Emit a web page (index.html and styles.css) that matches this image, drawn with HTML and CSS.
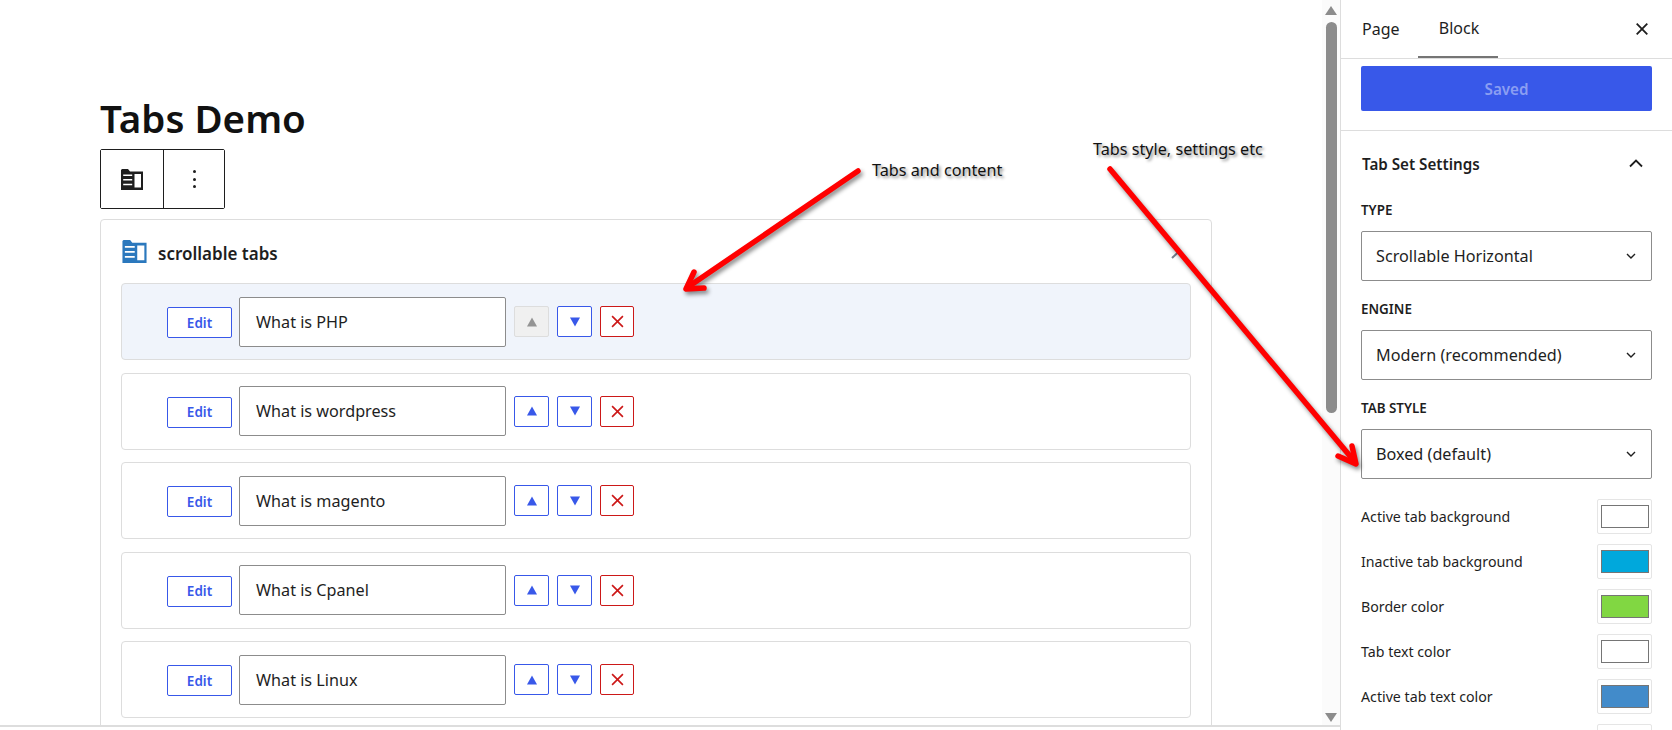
FILE: index.html
```html
<!DOCTYPE html>
<html lang="en">
<head>
    <meta charset="UTF-8">
    <title>Tabs Demo</title>
    <link rel="stylesheet" href="styles.css">
</head>
<body>
    <svg width="0" height="0" class="defs">
        <symbol id="tabs-icon" viewBox="0 0 22 21">
            <path fill-rule="evenodd" d="M1 0h6l2 2.500h13V21H0V1zM13.500 5v13.500H20V5zM2.200 5.500V7h9V5.500zM2.200 10v1.600h9V10zM2.200 14.700v1.600h9v-1.600z"/>
        </symbol>
        <symbol id="up" viewBox="0 0 12 12"><path d="M6 1.500 11 10.500H1z"/></symbol>
        <symbol id="down" viewBox="0 0 12 12"><path d="M1 1.500H11L6 10.500z"/></symbol>
        <symbol id="cross" viewBox="0 0 12 12"><path d="M1 1 11 11M11 1 1 11" fill="none" stroke="currentColor" stroke-width="1.500"/></symbol>
        <symbol id="chev" viewBox="0 0 10 6"><path d="M1 1 5 5 9 1" fill="none" stroke="currentColor" stroke-width="1.400"/></symbol>
    </svg>

    <div class="app">
        <div class="canvas">
            <div class="canvas__main">
                <h1 class="title">Tabs Demo</h1>
                <div class="toolbar">
                    <button class="toolbar__btn toolbar__btn--first"><svg class="toolbar__icon"><use href="#tabs-icon"/></svg></button>
                    <button class="toolbar__btn"><span class="dots"><i></i><i></i><i></i></span></button>
                </div>
                <div class="block">
                    <div class="block__head">
                        <svg class="block__icon"><use href="#tabs-icon"/></svg>
                        <span class="block__name">scrollable tabs</span>
                        <svg class="block__chev" viewBox="0 0 18 10"><path d="M1 9 9 1.500" fill="none" stroke="currentColor" stroke-width="2"/></svg>
                    </div>
                    <div class="row row--active">
                        <button class="edit">Edit</button>
                        <div class="field">What is PHP</div>
                        <button class="sq sq--off"><svg><use href="#up"/></svg></button>
                        <button class="sq"><svg><use href="#down"/></svg></button>
                        <button class="sq sq--del"><svg><use href="#cross"/></svg></button>
                    </div>
                    <div class="row">
                        <button class="edit">Edit</button>
                        <div class="field">What is wordpress</div>
                        <button class="sq"><svg><use href="#up"/></svg></button>
                        <button class="sq"><svg><use href="#down"/></svg></button>
                        <button class="sq sq--del"><svg><use href="#cross"/></svg></button>
                    </div>
                    <div class="row">
                        <button class="edit">Edit</button>
                        <div class="field">What is magento</div>
                        <button class="sq"><svg><use href="#up"/></svg></button>
                        <button class="sq"><svg><use href="#down"/></svg></button>
                        <button class="sq sq--del"><svg><use href="#cross"/></svg></button>
                    </div>
                    <div class="row">
                        <button class="edit">Edit</button>
                        <div class="field">What is Cpanel</div>
                        <button class="sq"><svg><use href="#up"/></svg></button>
                        <button class="sq"><svg><use href="#down"/></svg></button>
                        <button class="sq sq--del"><svg><use href="#cross"/></svg></button>
                    </div>
                    <div class="row">
                        <button class="edit">Edit</button>
                        <div class="field">What is Linux</div>
                        <button class="sq"><svg><use href="#up"/></svg></button>
                        <button class="sq"><svg><use href="#down"/></svg></button>
                        <button class="sq sq--del"><svg><use href="#cross"/></svg></button>
                    </div>
                </div>
            </div>
            <div class="scrollbar">
                <span class="scrollbar__up"></span>
                <span class="scrollbar__thumb"></span>
                <span class="scrollbar__down"></span>
            </div>
        </div>

        <aside class="side">
            <div class="tabs">
                <span class="tabs__item">Page</span>
                <span class="tabs__item tabs__item--on">Block</span>
                <svg class="tabs__close" viewBox="0 0 12 12"><path d="M.7.7 11.300 11.300M11.300.7.7 11.300" fill="none" stroke="currentColor" stroke-width="1.800"/></svg>
            </div>
            <div class="save"><button class="save__btn">Saved</button></div>
            <div class="panel">
                <div class="panel__head">
                    <span>Tab Set Settings</span>
                    <svg class="panel__chev" viewBox="0 0 14 9"><path d="M1 7.500 7 1.500 13 7.500" fill="none" stroke="currentColor" stroke-width="1.800"/></svg>
                </div>
                <div class="opt">
                    <div class="opt__label">TYPE</div>
                    <div class="select">Scrollable Horizontal<svg class="select__chev"><use href="#chev"/></svg></div>
                </div>
                <div class="opt">
                    <div class="opt__label">ENGINE</div>
                    <div class="select">Modern (recommended)<svg class="select__chev"><use href="#chev"/></svg></div>
                </div>
                <div class="opt">
                    <div class="opt__label">TAB STYLE</div>
                    <div class="select">Boxed (default)<svg class="select__chev"><use href="#chev"/></svg></div>
                </div>
                <div class="colors">
                    <div class="color"><span>Active tab background</span><span class="swatch"><i class="swatch__c swatch__c--white"></i></span></div>
                    <div class="color"><span>Inactive tab background</span><span class="swatch"><i class="swatch__c swatch__c--cyan"></i></span></div>
                    <div class="color"><span>Border color</span><span class="swatch"><i class="swatch__c swatch__c--green"></i></span></div>
                    <div class="color"><span>Tab text color</span><span class="swatch"><i class="swatch__c swatch__c--white"></i></span></div>
                    <div class="color"><span>Active tab text color</span><span class="swatch"><i class="swatch__c swatch__c--blue"></i></span></div>
                    <div class="color"><span></span><span class="swatch"><i class="swatch__c swatch__c--white"></i></span></div>
                </div>
            </div>
        </aside>
    </div>

    <!-- annotations drawn over the screenshot -->
    <span class="note note--one">Tabs and content</span>
    <span class="note note--two">Tabs style, settings etc</span>
    <svg class="arrows" viewBox="0 0 1672 730">
        <g fill="none" stroke="#f00" stroke-width="5.500" stroke-linecap="round" stroke-linejoin="round">
            <path d="M858 171 688 287"/>
            <path d="M694 272 686 289 704 288"/>
            <path d="M1110 169 1355 462"/>
            <path d="M1338 456 1356 464 1352 446"/>
        </g>
    </svg>
</body>
</html>
```

FILE: styles.css
```css
:root {
    --blue: #3858e9;
    --line: #ddd;
    --ink: #1e1e1e;
}

html,
body {
    height: 100%;
}

body {
    margin: 0;
    overflow: hidden;
    background: #fff;
    color: var(--ink);
    font-family: "Noto Sans", sans-serif;
    font-size: 14px;
}

button {
    font-family: inherit;
    padding: 0;
    background: #fff;
}

.defs {
    position: absolute;
}

.app {
    display: flex;
    height: 100%;
}

/* canvas */
.canvas {
    display: flex;
    flex: 1;
    min-width: 0;
    height: 725px;
    overflow: hidden;
    border-bottom: 2px solid var(--line);
}

.canvas__main {
    flex: 1;
    min-width: 0;
    padding: 93px 0 0 100px;
    overflow: hidden;
}

.title {
    margin: 0 0 5px;
    font-size: 38.500px;
    line-height: 51px;
    font-weight: 600;
    color: #111;
}

.toolbar {
    display: flex;
    width: 123px;
    height: 58px;
    border: 1px solid var(--ink);
    border-radius: 2px;
}

.toolbar__btn {
    flex: 1;
    display: flex;
    align-items: center;
    justify-content: center;
    border: 0;
}

.toolbar__btn--first {
    flex: 0 0 63px;
    border-right: 1px solid var(--ink);
}

.toolbar__icon {
    width: 22px;
    height: 21px;
    fill: #1e1e1e;
}

.dots {
    display: flex;
    flex-direction: column;
    gap: 4.500px;
}

.dots i {
    width: 3px;
    height: 3px;
    border-radius: 50%;
    background: var(--ink);
}

.block {
    width: 1070px;
    margin-top: 10px;
    padding: 0 20px 20px;
    border: 1px solid var(--line);
    border-radius: 4px;
}

.block__head {
    display: flex;
    align-items: center;
    gap: 11px;
    box-sizing: border-box;
    height: 63px;
    padding: 4px 0 0 1px;
    color: var(--ink);
}

.block__icon {
    width: 25px;
    height: 23px;
    margin-top: -4px;
    fill: #2b78bd;
}

.block__name {
    flex: 1;
    font-size: 17px;
    font-weight: 600;
}

.block__chev {
    width: 18px;
    height: 10px;
    margin-right: 2px;
    color: #757f8c;
}

.row {
    display: flex;
    align-items: center;
    gap: 8px;
    height: 75px;
    margin-bottom: 12.500px;
    padding-left: 45px;
    border: 1px solid var(--line);
    border-radius: 4px;
}

.row--active {
    background: #f0f4fb;
}

.edit {
    width: 65px;
    height: 31px;
    margin-top: 2px;
    margin-right: -1px;
    border: 1px solid var(--blue);
    border-radius: 2px;
    color: var(--blue);
    font-size: 13.500px;
    font-weight: 600;
}

.field {
    box-sizing: border-box;
    width: 267px;
    height: 50px;
    padding-left: 16px;
    border: 1px solid #8c8c8c;
    border-radius: 2px;
    background: #fff;
    font-size: 16.200px;
    line-height: 48px;
}

.sq {
    display: flex;
    align-items: center;
    justify-content: center;
    width: 35px;
    height: 31px;
    border: 1px solid var(--blue);
    border-radius: 2px;
    color: var(--blue);
}

.sq svg {
    width: 12px;
    height: 12px;
    fill: currentColor;
}

.sq--off {
    border-color: #ddd;
    background: #f0f0f0;
    color: #949494;
}

.sq--del {
    width: 34px;
    border-color: #cc1818;
    color: #cc1818;
}

.sq--del svg {
    width: 13px;
    height: 13px;
}

/* fake browser scrollbar */
.scrollbar {
    flex: 0 0 18px;
    display: flex;
    flex-direction: column;
    align-items: center;
    background: #fbfbfb;
}

.scrollbar__up {
    width: 0;
    margin: 6px 0 7px;
    border: 6px solid transparent;
    border-top: 0;
    border-bottom: 9px solid #8c8c8c;
}

.scrollbar__thumb {
    width: 11px;
    height: 391px;
    border-radius: 6px;
    background: #8c8c8c;
}

.scrollbar__down {
    width: 0;
    margin-top: auto;
    margin-bottom: 3px;
    border: 6px solid transparent;
    border-bottom: 0;
    border-top: 9px solid #8c8c8c;
}

/* sidebar */
.side {
    flex: 0 0 331px;
    height: 100%;
    overflow: hidden;
    border-left: 1px solid var(--line);
}

.tabs {
    display: flex;
    align-items: center;
    height: 58px;
    border-bottom: 1px solid var(--line);
}

.tabs__item {
    display: flex;
    align-items: center;
    box-sizing: border-box;
    width: 77px;
    height: 100%;
    padding-left: 21px;
    font-size: 16px;
}

.tabs__item--on {
    justify-content: center;
    width: 80px;
    padding-left: 2px;
    border-bottom: 2px solid #757575;
}

.tabs__close {
    width: 12px;
    height: 12px;
    margin-left: auto;
    margin-right: 24px;
}

.save {
    padding: 7px 20px 19px;
    border-bottom: 1px solid var(--line);
}

.save__btn {
    display: block;
    width: 100%;
    height: 45px;
    border: 0;
    border-radius: 2px;
    background: var(--blue);
    color: #8b9ef2;
    font-size: 15.200px;
    font-weight: 600;
}

.panel {
    padding: 0 20px;
}

.panel__head {
    display: flex;
    align-items: center;
    justify-content: space-between;
    height: 65px;
    margin-bottom: 4px;
    padding-left: 1px;
    font-size: 15.200px;
    font-weight: 600;
}

.panel__chev {
    width: 14px;
    height: 9px;
    margin-right: 9px;
}

.opt {
    margin-bottom: 18px;
}

.opt__label {
    height: 31px;
    font-size: 13.400px;
    font-weight: 600;
    line-height: 21px;
}

.select {
    box-sizing: border-box;
    display: flex;
    align-items: center;
    justify-content: space-between;
    height: 50px;
    padding: 0 15px 0 14px;
    border: 1px solid #8c8c8c;
    border-radius: 2px;
    font-size: 16.200px;
}

.select__chev {
    width: 10px;
    height: 6px;
}

.colors {
    display: flex;
    flex-direction: column;
    gap: 10px;
    margin-top: 20px;
}

.color {
    display: flex;
    align-items: center;
    justify-content: space-between;
    height: 35px;
    font-size: 14.200px;
}

.swatch {
    box-sizing: border-box;
    display: flex;
    align-items: center;
    justify-content: center;
    width: 55px;
    height: 35px;
    border: 1px solid #e5e5e5;
    border-radius: 2px;
}

.swatch__c {
    box-sizing: border-box;
    width: 48px;
    height: 23px;
    border: 1px solid #757575;
}

.swatch__c--white { background: #fff; }
.swatch__c--cyan { background: #00a8dc; }
.swatch__c--green { background: #81d742; }
.swatch__c--blue { background: #428bca; }

/* annotations */
.note {
    position: absolute;
    font-size: 16.200px;
    line-height: 20px;
    color: #111;
    text-shadow: 2px 2px 3px rgba(0, 0, 0, .45);
}

.note--one {
    left: 872px;
    top: 160px;
}

.note--two {
    left: 1093px;
    top: 139px;
}

.arrows {
    position: absolute;
    left: 0;
    top: 0;
    width: 1672px;
    height: 730px;
    pointer-events: none;
    filter: drop-shadow(2px 3px 2px rgba(0, 0, 0, .45));
}
```
